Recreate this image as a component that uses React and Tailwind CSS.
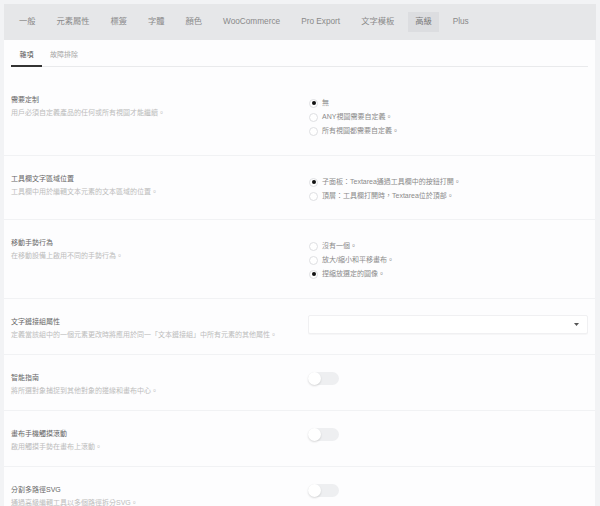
import React from "react";

const FONT = { fontFamily: '"Liberation Sans", "Noto Sans CJK TC", sans-serif' };

const tabs = ["一般", "元素屬性", "標簽", "字體", "顏色", "WooCommerce", "Pro Export", "文字模板", "高級", "Plus"];

function Radio({ checked, label }) {
  return (
    <div className="flex h-[14px] items-center gap-[4px]">
      <span className="ml-[1px] flex h-[9px] w-[9px] items-center justify-center rounded-full border border-[#dedfe2] bg-white">
        {checked && <span className="h-[4px] w-[4px] rounded-full bg-[#111]" />}
      </span>
      <span className="text-[7px] leading-[14px] text-[#8a8a8a]">{label}</span>
    </div>
  );
}

function Toggle() {
  return (
    <div className="relative mt-[1px] h-[13px] w-[31px] rounded-full bg-[#eeeff1]">
      <span className="absolute left-0 top-0 h-[13px] w-[13px] rounded-full bg-white shadow-[0_1px_2px_rgba(0,0,0,0.15)]" />
    </div>
  );
}

function Section({ title, desc, children, first, pb = "pb-[13px]" }) {
  return (
    <div className={`grid grid-cols-[297px_1fr] px-[7px] pt-[16px] ${pb} ${first ? "" : "border-t border-[#f1f2f4]"}`}>
      <div>
        <div className="text-[7px] leading-[13px] text-[#666]">{title}</div>
        <div className="text-[7px] leading-[13px] text-[#bcbcbc]">{desc}</div>
      </div>
      <div>{children}</div>
    </div>
  );
}

export default function App() {
  return (
    <div style={FONT} className="h-[506px] w-[600px] overflow-hidden bg-[#f2f3f5] pl-[4px] pt-[4px]">
      <div className="flex h-[36px] w-[592px] items-center gap-[7px] bg-[#e6e7e9] pl-[8px]">
        {tabs.map((t) => (
          <div
            key={t}
            className={`flex h-[20px] items-center px-[7px] text-[8.25px] text-[#8a8a8a] ${t === "高級" ? "bg-[#dcdde0] text-[#777]" : ""}`}
          >
            {t}
          </div>
        ))}
      </div>
      <div className="w-[591px] bg-[#fdfdfe] pb-[40px]">
        <div className="mx-[7px] flex h-[27px] border-b border-[#e9eaec]">
          <div className="mb-[-1px] border-b-2 border-[#333] px-[8.5px] pt-[10px] text-[7px] leading-[10px] text-[#555]">雜項</div>
          <div className="px-[8px] pt-[10px] text-[7px] leading-[10px] text-[#a5a5a5]">故障排除</div>
        </div>
        <div className="mt-[10px]">
          <Section first pb="pb-[14px]" title="需要定制" desc="用戶必須自定義產品的任何或所有視圖才能繼續。">
            <div className="pb-[3px] pt-[3px]">
              <Radio checked label="無" />
              <Radio label="ANY視圖需要自定義。" />
              <Radio label="所有視圖都需要自定義。" />
            </div>
          </Section>
          <Section title="工具欄文字區域位置" desc="工具欄中用於編輯文本元素的文本區域的位置。">
            <div className="pb-[3px] pt-[3px]">
              <Radio checked label="子面板：Textarea通過工具欄中的按鈕打開。" />
              <Radio label="頂層：工具欄打開時，Textarea位於頂部。" />
            </div>
          </Section>
          <Section pb="pb-[14px]" title="移動手勢行為" desc="在移動設備上啟用不同的手勢行為。">
            <div className="pb-[3px] pt-[3px]">
              <Radio label="沒有一個。" />
              <Radio label="放大/縮小和平移畫布。" />
              <Radio checked label="捏縮放選定的圖像。" />
            </div>
          </Section>
          <Section title="文字鏈接組屬性" desc="定義當該組中的一個元素更改時將應用於同一「文本鏈接組」中所有元素的其他屬性。">
            <div className="flex h-[19px] items-center justify-end rounded-[2px] border border-[#f0f0f2] bg-white pr-[8px] shadow-[0_1px_1px_rgba(0,0,0,0.03)]">
              <svg width="5" height="3" viewBox="0 0 5 3">
                <path d="M0 0 L5 0 L2.5 3 Z" fill="#555" />
              </svg>
            </div>
          </Section>
          <Section title="智能指南" desc="將所選對象捕捉到其他對象的邊緣和畫布中心。">
            <Toggle />
          </Section>
          <Section title="畫布手機觸摸滾動" desc="啟用觸摸手勢在畫布上滾動。">
            <Toggle />
          </Section>
          <Section title="分割多路徑SVG" desc="通過高級編輯工具以多個路徑拆分SVG。">
            <Toggle />
          </Section>
        </div>
      </div>
    </div>
  );
}
